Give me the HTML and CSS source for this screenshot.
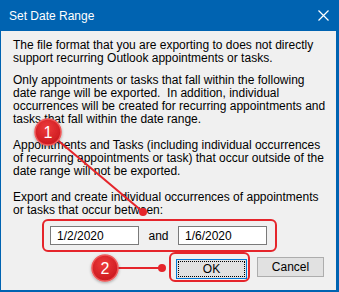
FILE: index.html
```html
<!DOCTYPE html>
<html lang="en">
<head>
    <meta charset="UTF-8">
    <title>Set Date Range</title>
    <link rel="stylesheet" href="styles.css">
</head>
<body>

    <div class="dialog">
        <div class="titlebar">
            <span class="title">Set Date Range</span>
            <svg class="close" width="11" height="11" viewBox="0 0 11 11">
                <path d="M0.5 0.5 L10.5 10.5 M10.5 0.5 L0.5 10.5" stroke="#fff" stroke-width="1.2" fill="none"/>
            </svg>
        </div>

        <div class="content">
            <p class="p1">The file format that you are exporting to does not directly<br>support recurring Outlook appointments or tasks.</p>
            <p class="p2">Only appointments or tasks that fall within the following<br>date range will be exported.&nbsp; In addition, individual<br>occurrences will be created for recurring appointments and<br>tasks that fall within the date range.</p>
            <p class="p3">Appointments and Tasks (including individual occurrences<br>of recurring appointments or task) that occur outside of the<br>date range will not be exported.</p>
            <p class="p4">Export and create individual occurrences of appointments<br>or tasks that occur between:</p>

            <div class="date-row">
                <input class="date-input" type="text" value="1/2/2020">
                <span class="and">and</span>
                <input class="date-input" type="text" value="1/6/2020">
            </div>

            <div class="button-row">
                <div class="ok-wrap">
                    <button class="btn btn-ok">OK</button>
                </div>
                <button class="btn">Cancel</button>
            </div>
        </div>

        <!-- anotaciones -->
        <svg class="marks" width="339" height="292" viewBox="0 0 339 292">
            <defs>
                <radialGradient id="bola" cx="45%" cy="35%" r="70%">
                    <stop offset="0" stop-color="#ee3b3b"/>
                    <stop offset="1" stop-color="#c8161d"/>
                </radialGradient>
                <filter id="sombra" x="-50%" y="-50%" width="200%" height="200%">
                    <feDropShadow dx="0" dy="1" stdDeviation="1.5" flood-color="#000" flood-opacity="0.35"/>
                </filter>
            </defs>
            <line x1="48" y1="132" x2="143" y2="212" stroke="#e5252b" stroke-width="2"/>
            <circle cx="143" cy="212" r="4" fill="#e5252b"/>
            <circle cx="48" cy="132" r="13" fill="url(#bola)" stroke="#f05a5a" stroke-width="1.5" filter="url(#sombra)"/>
            <text x="48" y="138" class="num">1</text>

            <line x1="105" y1="268" x2="162" y2="268" stroke="#e5252b" stroke-width="2"/>
            <circle cx="162" cy="268" r="4" fill="#e5252b"/>
            <circle cx="105" cy="268" r="13" fill="url(#bola)" stroke="#f05a5a" stroke-width="1.5" filter="url(#sombra)"/>
            <text x="105" y="274" class="num">2</text>
        </svg>
    </div>

</body>
</html>
```

FILE: styles.css
```css
body {
    margin: 0;
    padding: 0;
    font-family: "Liberation Sans", Arial, sans-serif;
    font-size: 12px;
    background-color: #f0f0f0;
}
.dialog {
    position: relative;
    width: 339px;
    height: 292px;
    box-sizing: border-box;
    background-color: #f0f0f0;
    border-left: 1px solid #0063b1;
    border-right: 3px solid #0063b1;
    border-bottom: 2px solid #0063b1;
}
.titlebar {
    height: 31px;
    background-color: #0063b1;
    color: white;
    display: flex;
    align-items: center;
    justify-content: space-between;
    padding: 0 10px 0 9px;
    margin-left: -1px;
    margin-right: -3px;
}
.title {
    font-size: 12px;
}
.close {
    margin-top: -1px;
}
.content {
    padding: 8px 12px 0 12px;
}
.content p {
    margin: 0;
    line-height: 13px;
    color: #000;
    white-space: nowrap;
}
.p2 {
    margin-top: 9px !important;
}
.p3,
.p4 {
    margin-top: 13px !important;
}
.date-row {
    display: flex;
    align-items: center;
    width: 235px;
    height: 33px;
    box-sizing: border-box;
    margin: 2px 0 0 29px;
    padding: 0 8px 0 6px;
    border: 2px solid #e5252b;
    border-radius: 6px;
}
.date-input {
    width: 89px;
    height: 19px;
    box-sizing: border-box;
    border: 1px solid #7a7a7a;
    background-color: white;
    font-family: inherit;
    font-size: 12px;
    padding: 0 6px;
    margin: 0;
    color: #000;
}
.and {
    width: 39px;
    text-align: center;
}
.button-row {
    display: flex;
    justify-content: flex-end;
    align-items: center;
    gap: 7px;
}
.ok-wrap {
    border: 2px solid #e5252b;
    border-radius: 6px;
    padding: 5px 2px 2px 5px;
    width: 81px;
    height: 30px;
    box-sizing: border-box;
}
.btn {
    height: 20px;
    width: 67px;
    box-sizing: border-box;
    background-color: #e1e1e1;
    border: 1px solid #adadad;
    font-family: inherit;
    font-size: 12px;
    color: #000;
    padding: 0;
    margin: 0;
}
.btn-ok {
    width: 71px;
    border: 1px solid #0078d7;
    outline: 1px dotted #000;
    outline-offset: -3px;
}
.marks {
    position: absolute;
    left: -1px;
    top: 0;
    pointer-events: none;
}
.num {
    fill: white;
    font-family: "Liberation Sans", sans-serif;
    font-size: 16px;
    text-anchor: middle;
}
```
